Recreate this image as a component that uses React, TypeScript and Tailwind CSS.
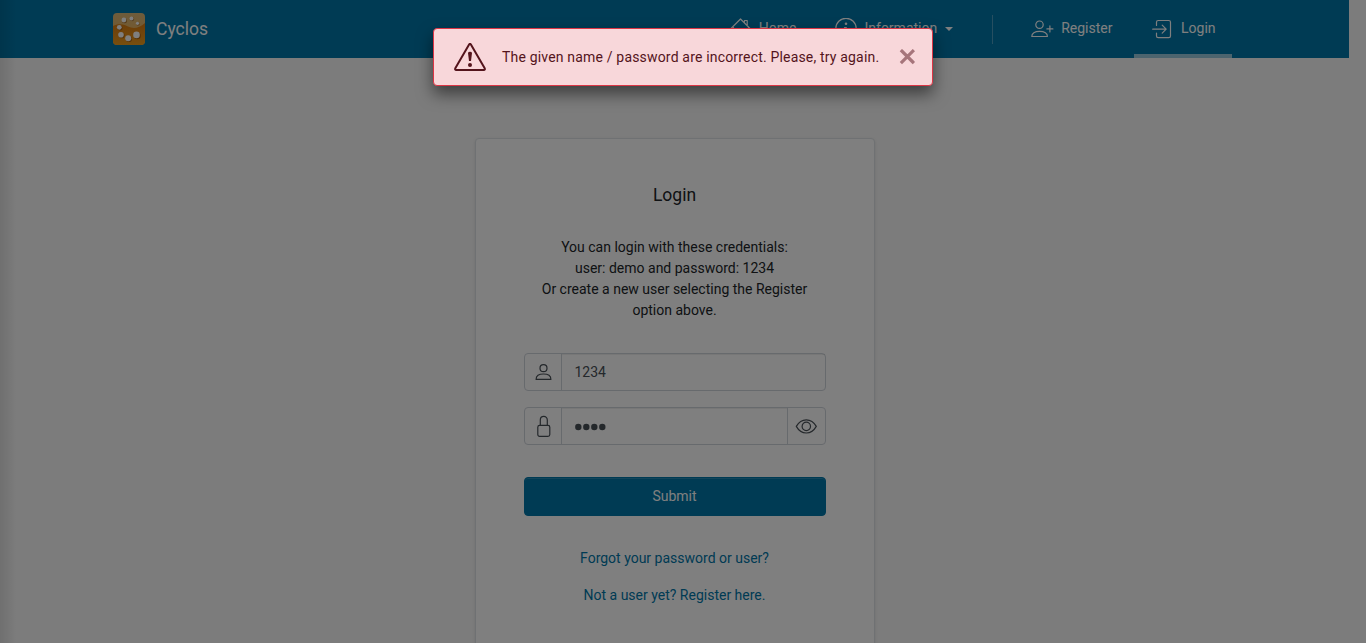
import type { ReactNode } from "react";

function Icon({ w, h, className = "", children, sw = 1.2 }: { w: number; h: number; className?: string; children: ReactNode; sw?: number }) {
  return (
    <svg width={w} height={h} viewBox={`0 0 ${w} ${h}`} fill="none" stroke="currentColor" strokeWidth={sw} strokeLinecap="round" strokeLinejoin="round" className={`shrink-0 ${className}`}>
      {children}
    </svg>
  );
}

function Logo() {
  return (
    <svg width="32" height="32" viewBox="0 0 32 32" className="shrink-0">
      <defs>
        <linearGradient id="top" x1="0" y1="0" x2="0" y2="1">
          <stop offset="0" stopColor="#dcb878" />
          <stop offset="1" stopColor="#f0b050" />
        </linearGradient>
        <linearGradient id="bottom" x1="0" y1="0" x2="0" y2="1">
          <stop offset="0" stopColor="#d87a12" />
          <stop offset="1" stopColor="#ee9c1c" />
        </linearGradient>
      </defs>
      <rect width="32" height="32" rx="4" fill="url(#top)" />
      <path d="M0 13C5 10.500 10 11 15 13.500S26 15.500 32 10V28Q32 32 28 32H4Q0 32 0 28Z" fill="url(#bottom)" />
      <g fill="#8a4a08" opacity="0.6">
        <circle cx="11.500" cy="7.700" r="2.500" /><circle cx="19.100" cy="6.100" r="2.100" /><circle cx="25" cy="10.900" r="1.700" />
        <circle cx="7" cy="15" r="2.500" /><circle cx="8.700" cy="22.400" r="2.900" /><circle cx="16" cy="26" r="3.100" /><circle cx="24.300" cy="22.700" r="3.500" />
      </g>
      <g fill="#fff">
        <circle cx="10.900" cy="7" r="2.400" /><circle cx="18.500" cy="5.500" r="2" /><circle cx="24.500" cy="10.300" r="1.600" />
        <circle cx="6.300" cy="14.300" r="2.400" /><circle cx="8" cy="21.700" r="2.800" /><circle cx="15.200" cy="25.300" r="3" /><circle cx="23.500" cy="21.900" r="3.300" />
      </g>
    </svg>
  );
}

function Header() {
  return (
    <header className="flex h-[58px] w-[1349px] bg-[#0076a8] pr-[117px] pl-[113px] text-white">
      <div className="flex items-center gap-[11px]">
        <Logo />
        <span className="text-[17.5px] leading-[21px]">Cyclos</span>
      </div>
      <nav className="ml-auto flex h-[58px] items-center">
        <a className="flex h-full items-center px-[17.5px]">
          <Icon w={22} h={22} className="mr-[7px]">
            <path d="M1 10.500 10.500 1 20 10.500M3.500 9.500V20h5v-6h5v6h5V9.500M14.500 4V2.500h2.700V7" />
          </Icon>
          <span className="pb-0.5">Home</span>
        </a>
        <a className="ml-[4px] flex h-full items-center px-[17.5px]">
          <Icon w={22} h={22} className="mr-[7px]">
            <circle cx="11" cy="10.500" r="10.200" />
            <path d="M9.500 9.500H11.300V16M9.300 16h4" />
            <circle cx="11" cy="5.700" r="0.700" fill="currentColor" />
          </Icon>
          <span className="pb-0.5">Information</span>
          <span className="ml-[7.5px] border-x-4 border-t-4 border-x-transparent border-t-white" />
        </a>
        <span className="mr-[21.5px] ml-[21.5px] h-[29px] w-px bg-white/30" />
        <a className="flex h-full items-center px-[17px]">
          <Icon w={23} h={22} className="mr-[7px]">
            <circle cx="8.500" cy="6.700" r="3.700" />
            <path d="M.8 18.500C.7 15.100 3.800 13.400 8.600 13.400s8 1.700 7.800 5.100ZM18.900 7.900v6M15.900 10.900h6" />
          </Icon>
          <span className="pb-0.5">Register</span>
        </a>
        <a className="ml-[4.5px] flex h-full w-[98px] items-center border-b-4 border-white/60 pt-1 pl-[18px]">
          <Icon w={22} h={22} className="mr-[7px]">
            <path d="M4.500 7.500V4.200Q4.500 2.500 6.200 2.500H16.800Q18.500 2.500 18.500 4.200V18Q18.500 19.700 16.800 19.700H6.200Q4.500 19.700 4.500 18V15M.7 11.200H13.500M10.200 7.200 14.200 11.200 10.200 15.200" />
          </Icon>
          <span className="pb-0.5">Login</span>
        </a>
      </nav>
    </header>
  );
}

function LoginCard() {
  return (
    <section className="mx-auto mt-[80px] flex h-[560px] w-[400px] flex-col rounded border border-[#dee2e6] bg-white px-[48px] pt-[43px] text-center shadow-sm">
      <h1 className="text-[17.5px] leading-[27px]">Login</h1>
      <p className="mt-[28px] leading-[21px]">
        You can login with these credentials:<br />user: demo and password: 1234<br />Or create a new user selecting the Register<br />option above.
      </p>
      <div className="mt-[32px] flex h-[38px] rounded border border-[#ced4da] text-[#495057]">
        <span className="flex w-[37px] items-center justify-center border-r border-[#ced4da] pl-px">
          <Icon w={17} h={18}>
            <circle cx="8.500" cy="5.200" r="3.500" />
            <path d="M1.100 16.400C1 12.800 3.700 11 8.500 11s7.500 1.800 7.400 5.400Z" />
          </Icon>
        </span>
        <span className="flex flex-1 items-center pl-[13px] shadow-[inset_0_1px_1px_rgba(0,0,0,0.075)]">1234</span>
      </div>
      <div className="mt-[16px] flex h-[38px] rounded border border-[#ced4da] text-[#495057]">
        <span className="flex w-[37px] items-center justify-center border-r border-[#ced4da] pl-px">
          <Icon w={15} h={22}>
            <rect x="1.800" y="10.400" width="12" height="11" rx="1.800" />
            <path d="M4.300 10.400V4.900a3.500 3.500 0 0 1 7 0v5.500" />
          </Icon>
        </span>
        <span className="flex flex-1 items-center pl-[12px] shadow-[inset_0_1px_1px_rgba(0,0,0,0.075)]">
          <svg width="34" height="8" viewBox="0 0 34 8" fill="currentColor" className="mt-[2px]">
            <circle cx="4.300" cy="4" r="3.200" /><circle cx="12.300" cy="4" r="3.200" /><circle cx="20.300" cy="4" r="3.200" /><circle cx="28.300" cy="4" r="3.200" />
          </svg>
        </span>
        <span className="flex w-[38px] items-center justify-center border-l border-[#ced4da]">
          <Icon w={22} h={18}>
            <path d="M1.300 9.400C6.300.6 16.300.6 21.300 9.400 16.300 18.200 6.300 18.200 1.300 9.400Z" />
            <circle cx="11.300" cy="9.400" r="4.200" />
          </Icon>
        </span>
      </div>
      <button className="mt-[32px] h-[39px] rounded border border-[#0076a8] bg-[#0076a8] text-white shadow-[inset_0_1px_0_rgba(255,255,255,0.15)]">Submit</button>
      <a className="mt-[32px] leading-[21px] text-[#0076a8]">Forgot your password or user?</a>
      <a className="mt-[16px] leading-[21px] text-[#0076a8]">Not a user yet? Register here.</a>
    </section>
  );
}

export default function App() {
  return (
    <div className="relative h-[643px] w-full overflow-hidden bg-[#f8f8f8] font-['Roboto',sans-serif] text-[14px] leading-[21px] text-[#212529]">
      <Header />
      <main className="w-[1349px]">
        <LoginCard />
      </main>
      <div className="absolute inset-y-0 left-0 w-4 bg-linear-to-r from-black/10 to-transparent" />
      <div className="absolute inset-0 bg-black/50" />
      <div role="alert" className="absolute top-[28px] left-[433px] flex h-[58px] w-[500px] items-center rounded border border-[#dc3545] bg-[#f8d7da] pl-[20px] text-[#54141c] shadow-[0_8px_16px_rgba(0,0,0,0.5)]">
        <Icon w={32} h={28} sw={2}>
          <path d="M15.100 1.500Q16 .3 16.900 1.500L30.700 25.300Q31.300 27 29.800 27H2.200Q.7 27 1.300 25.300Z" />
          <path d="M14 10.200Q14 8.800 16 8.800T18 10.200L17 18H15Z" fill="currentColor" stroke="none" />
          <circle cx="16" cy="22" r="2" fill="currentColor" stroke="none" />
        </Icon>
        <span className="ml-[16px] whitespace-nowrap tracking-[0.178px]">The given name / password are incorrect. Please, try again.</span>
        <Icon w={16} h={16} sw={3.2} className="ml-auto mr-[17px] text-[#a6757b]">
          <path d="M3 2.200 13.800 13M13.800 2.200 3 13" strokeLinecap="square" />
        </Icon>
      </div>
    </div>
  );
}
